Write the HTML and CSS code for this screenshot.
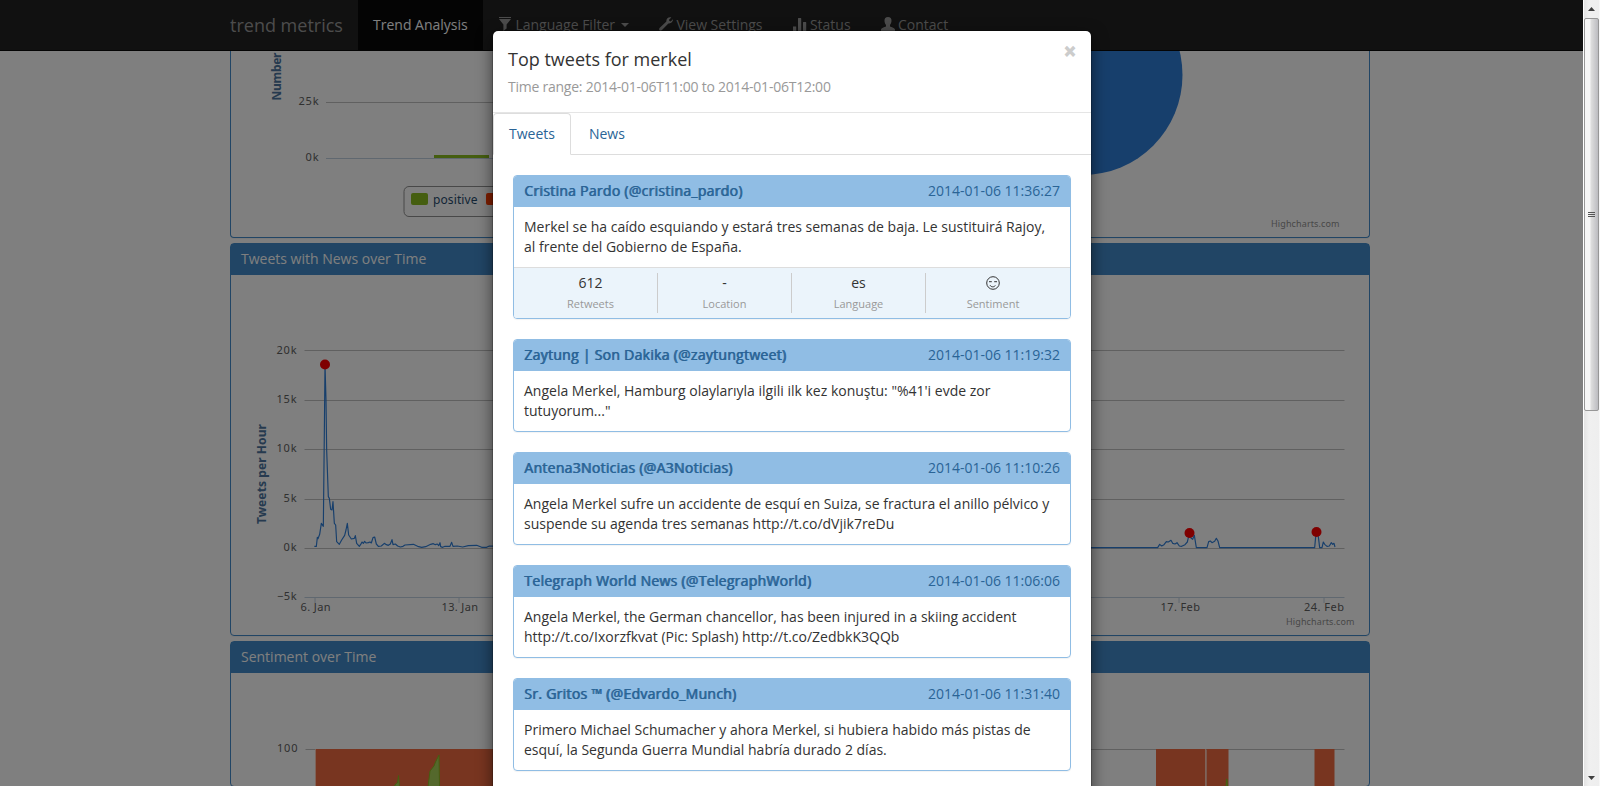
FILE: index.html
```html
<!DOCTYPE html>
<html lang="en">
<head>
<meta charset="utf-8">
<title>trend metrics</title>
<link rel="stylesheet" href="styles.css">
</head>
<body>
<div class="page">
  <nav class="navbar">
    <div class="container navbar-row">
      <a class="brand">trend metrics</a>
      <a class="nav-item active">Trend Analysis</a>
      <a class="nav-item"><svg class="icon" viewBox="0 0 14 14"><path d="M1 0h12v1H1zM1 2h12L8.600 7.500v4L5.400 14V7.500z"/></svg>Language Filter<span class="caret"></span></a>
      <a class="nav-item"><svg class="icon" viewBox="0 0 14 14"><path d="M12.300.500 10 2.800l.400 1.300 1.300.400L14 2.200c.200 2.300-1.700 4.600-4.600 4.200L3 13c-.800.800-1.900.800-2.500.200S0 11.500.800 10.700L7.400 4.500C7 2 9.200-.200 12.300.500z"/></svg>View Settings</a>
      <a class="nav-item"><svg class="icon" viewBox="0 0 14 14"><path d="M0 9.500h3.200V14H0zM5 1.500Q5 1 5.500 1h2.200q.500 0 .500.500V14H5zM10 5.500q0-.500.500-.500h2.200q.500 0 .500.500V14H10z"/></svg>Status</a>
      <a class="nav-item"><svg class="icon" viewBox="0 0 14 14"><path d="M7 0c2.400 0 3.700 1.600 3.500 4-.100 2-1 3.300-1.500 4v1.400c1.500.800 4.700 1.300 5 3.100V14H0v-1.500c.300-1.800 3.500-2.300 5-3.100V8c-.600-.700-1.400-2-1.500-4C3.300 1.600 4.600 0 7 0z"/></svg>Contact</a>
    </div>
  </nav>
  <main class="container">
    <section class="panel panel-cut">
      <svg class="chart" width="1138" height="186" viewBox="231 51 1138 186">
        <path class="grid" d="M326 102.500H840"/>
        <path class="axis" d="M326 158.500H840"/>
        <text class="axis-title" transform="translate(281 100.500) rotate(-90)" textLength="48">Number</text>
        <text class="label" x="298.500" y="105" textLength="20">25k</text>
        <text class="label" x="305.500" y="161" textLength="13">0k</text>
        <path fill="#8bbc21" d="M434 155h55v3h-55z"/>
        <rect class="legend-box" x="404" y="186.500" width="180" height="30" rx="5"/>
        <rect x="411" y="193" width="17" height="12" rx="2" fill="#8bbc21"/>
        <text class="legend-text" x="433" y="204" textLength="44.500">positive</text>
        <rect x="486" y="193" width="17" height="12" rx="2" fill="#ff3d00"/>
        <circle cx="1082.500" cy="75" r="100" fill="#2f7ed8"/>
        <text class="credit" x="1271" y="227" textLength="68.500">Highcharts.com</text>
      </svg>
    </section>
    <section class="panel">
      <h3 class="panel-title">Tweets with News over Time</h3>
      <svg class="chart" width="1138" height="360" viewBox="231 275 1138 360">
        <path class="grid" d="M304.500 350.500H1344.500M304.500 400.500H1344.500M304.500 449.500H1344.500M304.500 499.500H1344.500M304.500 548.500H1344.500"/>
        <path class="axis" d="M304.500 597.500H1344.500M315 598v5M459 598v5M1179 598v5M1324 598v5"/>
        <text class="axis-title" transform="translate(266 524) rotate(-90)" textLength="100">Tweets per Hour</text>
        <text class="label" x="276.500" y="354" textLength="20">20k</text>
        <text class="label" x="276.500" y="403" textLength="20">15k</text>
        <text class="label" x="276.500" y="452" textLength="20">10k</text>
        <text class="label" x="283.500" y="502" textLength="13">5k</text>
        <text class="label" x="283.500" y="551" textLength="13">0k</text>
        <text class="label" x="277" y="600" textLength="19.500">−5k</text>
        <text class="label" x="300.500" y="611" textLength="30">6. Jan</text>
        <text class="label" x="441.500" y="611" textLength="36.500">13. Jan</text>
        <text class="label" x="1160.500" y="611" textLength="39.500">17. Feb</text>
        <text class="label" x="1304" y="611" textLength="40">24. Feb</text>
        <text class="credit" x="1286" y="625" textLength="68.500">Highcharts.com</text>
        <g class="series" transform="translate(220 500) scale(.33333)">
          <path d="M283 139 289 139 292 112 294 116 299 103 304 70 310 79 313-200 315-407 318-300 320-150 325-10 328-5 332 28 336 30 339 5 343 70 347 75 350 125 358 133 365 120 374 106 378 90 382 70 386 105 394 117 403 115 406 107 410 130 418 139 424 130 426 126 430 130 434 124 438 129 445 128 450 126 454 129 459 113 464 111 469 132 475 139 484 138 493 130 499 134 505 136 511 132 516 119 519 134 526 132 533 138 541 141 549 139 555 135 580 133 593 139 605 142 617 140 632 133 640 131 646 134 652 132 656 137 660 128 662 140 668 142 675 139 690 139 695 127 699 139 712 138 728 141 745 137 770 136 785 142 800 142 808 138 1000 139"/>
        </g>
        <g class="series" transform="translate(1080 490) scale(.33333)">
          <path d="M-100 173H233L239 163 245 168 252 164 259 155 265 156 273 151 278 160 285 162 291 158 298 168 305 169 315 164 322 156 328 130 333 144 338 148 343 136 349 173H381L386 155 391 153 396 158 404 154 409 145 414 153 419 173H704L707 140 709 126 715 140 719 173H726L730 156 734 163 741 169 748 168 754 158 758 163 762 160 765 171"/>
        </g>
        <g fill="#f00"><circle cx="325" cy="364.500" r="5"/><circle cx="1189.500" cy="533" r="5"/><circle cx="1316.500" cy="532" r="5"/></g>
      </svg>
    </section>
    <section class="panel">
      <h3 class="panel-title">Sentiment over Time</h3>
      <svg class="chart" width="1138" height="113" viewBox="231 673 1138 113">
        <path class="grid" d="M305.500 749.500H1344.500"/>
        <text class="label" x="277" y="752" textLength="20.500">100</text>
        <path class="band-edge" d="M315.500 749v37M1205.500 749v37"/>
        <path class="negative" d="M316 749h600v37H316zM1156 749h49v37h-49zM1206.500 749h22v37h-22zM1314.500 749h20v37h-20z"/>
        <path class="positive" d="M394.500 786 396 783.500 397.500 783 398.500 775.500 399.500 787zM428 787 430 771 434 766 435.500 762 439 755 439.500 787zM1226 787 1226.500 779 1227 779 1227.500 787z"/>
      </svg>
    </section>
  </main>
</div>

<div class="backdrop"></div>

<div class="modal-layer">
  <div class="modal">
    <header class="modal-header">
      <div class="modal-top"><h4 class="modal-title">Top tweets for merkel</h4><span class="close">×</span></div>
      <p class="modal-sub">Time range: 2014-01-06T11:00 to 2014-01-06T12:00</p>
    </header>
    <div class="tabs"><a class="tab active">Tweets</a><a class="tab">News</a></div>
    <div class="tweets">
      <article class="tweet">
        <div class="tweet-head"><b>Cristina Pardo (@cristina_pardo)</b><time>2014-01-06 11:36:27</time></div>
        <p class="tweet-body">Merkel se ha caído esquiando y estará tres semanas de baja. Le sustituirá Rajoy,<br>al frente del Gobierno de España.</p>
        <div class="stats">
          <div class="stat"><span>612</span><small>Retweets</small></div>
          <div class="stat"><span>-</span><small>Location</small></div>
          <div class="stat"><span>es</span><small>Language</small></div>
          <div class="stat"><span><svg class="face" viewBox="0 0 14 14"><circle cx="7" cy="7" r="6.300"/><path d="M3 5.700h2.800M8.200 5.700H11M4 9.200c1.200 2 4 2.200 5.300.300"/></svg></span><small>Sentiment</small></div>
        </div>
      </article>
      <article class="tweet">
        <div class="tweet-head"><b>Zaytung | Son Dakika (@zaytungtweet)</b><time>2014-01-06 11:19:32</time></div>
        <p class="tweet-body">Angela Merkel, Hamburg olaylarıyla ilgili ilk kez konuştu: "%41'i evde zor<br>tutuyorum..."</p>
      </article>
      <article class="tweet">
        <div class="tweet-head"><b>Antena3Noticias (@A3Noticias)</b><time>2014-01-06 11:10:26</time></div>
        <p class="tweet-body">Angela Merkel sufre un accidente de esquí en Suiza, se fractura el anillo pélvico y<br>suspende su agenda tres semanas http://t.co/dVjik7reDu</p>
      </article>
      <article class="tweet">
        <div class="tweet-head"><b>Telegraph World News (@TelegraphWorld)</b><time>2014-01-06 11:06:06</time></div>
        <p class="tweet-body">Angela Merkel, the German chancellor, has been injured in a skiing accident<br>http://t.co/Ixorzfkvat (Pic: Splash) http://t.co/ZedbkK3QQb</p>
      </article>
      <article class="tweet">
        <div class="tweet-head"><b>Sr. Gritos ™ (@Edvardo_Munch)</b><time>2014-01-06 11:31:40</time></div>
        <p class="tweet-body">Primero Michael Schumacher y ahora Merkel, si hubiera habido más pistas de<br>esquí, la Segunda Guerra Mundial habría durado 2 días.</p>
      </article>
    </div>
  </div>
</div>

<div class="scrollbar">
  <svg class="arrow" viewBox="0 0 17 18"><path d="M5 11h7L8.500 7z"/></svg>
  <div class="thumb"><i></i><i></i><i></i></div>
  <div class="track"></div>
  <svg class="arrow" viewBox="0 0 17 18"><path d="M5 8h7L8.500 12z"/></svg>
</div>
</body>
</html>
```
FILE: styles.css
```css
* { box-sizing: border-box; }
body {
  margin: 0;
  height: 786px;
  overflow: hidden;
  position: relative;
  background: #fff;
  color: #333;
  font: 14px/20px "Open Sans", "Noto Sans", sans-serif;
}
h3, h4, p { margin: 0; font-weight: 400; }
.page { height: 786px; overflow: hidden; }
.container { width: 1140px; margin: 0 auto; }

.navbar { height: 51px; background: #222; border-bottom: 1px solid #080808; color: #999; }
.navbar-row { display: flex; }
.brand { width: 128px; padding: 15px 0; font-size: 18px; }
.nav-item { display: flex; align-items: center; height: 50px; padding: 0 15px; white-space: nowrap; }
.nav-item.active { width: 125px; background: #080808; color: #fff; }
.icon { width: 14px; height: 14px; margin: 0 3.4px 2px 0; fill: #999; flex: none; }
.caret { margin-left: 6px; border: 4px solid transparent; border-top-color: #999; border-bottom: 0; }

.panel {
  margin-bottom: 5px;
  border: 1px solid #428bca;
  border-radius: 4px;
  box-shadow: 0 1px 1px rgba(0, 0, 0, .05);
}
.panel-cut { border-top: 0; border-radius: 0 0 4px 4px; }
.panel-title { height: 31px; padding: 5px 10px; background: #428bca; color: #fff; font-size: 14px; }
.chart { display: block; font-family: "Noto Sans", "Open Sans", sans-serif; }
.grid { stroke: #c0c0c0; fill: none; }
.axis { stroke: #c0d0e0; fill: none; }
.label { font-size: 11px; fill: #606060; }
.axis-title { font-size: 12px; font-weight: 700; fill: #4d759e; }
.legend-box { fill: none; stroke: #909090; }
.legend-text { font-size: 12px; fill: #274b6d; }
.credit { font-size: 9px; fill: #909090; }
.series path { fill: none; stroke: #2f7ed8; stroke-width: 3.5; stroke-linejoin: round; }
.negative { fill: #f06a40; }
.positive { fill: #a8d058; stroke: #8bbc21; }
.band-edge { stroke: #ffc8b4; }

.backdrop { position: absolute; inset: 0; background: rgba(0, 0, 0, .5); }
.modal-layer { position: absolute; inset: 0 17px 0 0; overflow: hidden; padding-top: 30px; }
.modal {
  width: 600px;
  height: 900px;
  margin-left: 492px;
  background: #fff;
  background-clip: padding-box;
  border: 1px solid rgba(0, 0, 0, .2);
  border-radius: 6px;
  box-shadow: 0 5px 15px rgba(0, 0, 0, .5);
}
.modal-header { height: 82px; padding: 15px; border-bottom: 1px solid #e5e5e5; }
.modal-top { display: flex; justify-content: space-between; height: 26px; margin-bottom: 5px; }
.modal-title { font-size: 18px; line-height: 26px; }
.close { font-size: 21px; line-height: 10px; font-weight: 700; color: #ccc; -webkit-text-stroke: 1px #ccc; }
.modal-sub { color: #999; letter-spacing: -.24px; }
.tabs { display: flex; gap: 2px; height: 42px; border-bottom: 1px solid #ddd; }
.tab { height: 42px; padding: 10px 15px; border: 1px solid transparent; border-radius: 4px 4px 0 0; color: #2a6496; }
.tab.active { background: #fff; border-color: #ddd #ddd #fff; }
.tweets { display: flex; flex-direction: column; gap: 20px; padding: 20px; }
.tweet { border: 1px solid #90bde4; border-radius: 4px; box-shadow: 0 1px 1px rgba(0, 0, 0, .05); overflow: hidden; }
.tweet-head { display: flex; justify-content: space-between; height: 31px; padding: 5px 10px; background: #90bde4; color: #2a6496; }
.tweet-head b { font-weight: 400; letter-spacing: .28px; text-shadow: .8px 0 #2a6496; }
.tweet-body { height: 60px; padding: 10px; white-space: nowrap; }
.stats { display: flex; height: 51px; padding: 5px 10px; border-top: 1px solid #ddd; background: #ebf4fb; }
.stat { flex: 0 0 25%; display: flex; flex-direction: column; height: 40px; text-align: center; border-right: 1px solid #ccc; }
.stat:last-child { border-right: 0; }
.stat small { font-size: 11px; line-height: 22px; color: #999; }
.stat span { height: 20px; }
.face { width: 14px; height: 14px; margin-top: 3px; fill: none; stroke: #333; stroke-width: 1; }

.scrollbar {
  position: absolute;
  top: 0;
  right: 0;
  bottom: 0;
  width: 17px;
  display: flex;
  flex-direction: column;
  background: linear-gradient(90deg, #fff 0 1px, #e3e3e3 1px, #f0f0f0 6px, #eee 16px, #fff);
}
.arrow { width: 17px; height: 18px; flex: none; fill: #404040; }
.thumb {
  display: flex;
  flex-direction: column;
  align-items: center;
  justify-content: center;
  gap: 1px;
  height: 393px;
  margin: 0 1px;
  border: 1px solid #979797;
  border-radius: 2px;
  background: linear-gradient(90deg, #f6f6f6 0 35%, #dcdcdc 50%, #bcbcc0);
}
.thumb i { width: 7px; height: 1px; background: #555; }
.track { flex: 1; }
```
